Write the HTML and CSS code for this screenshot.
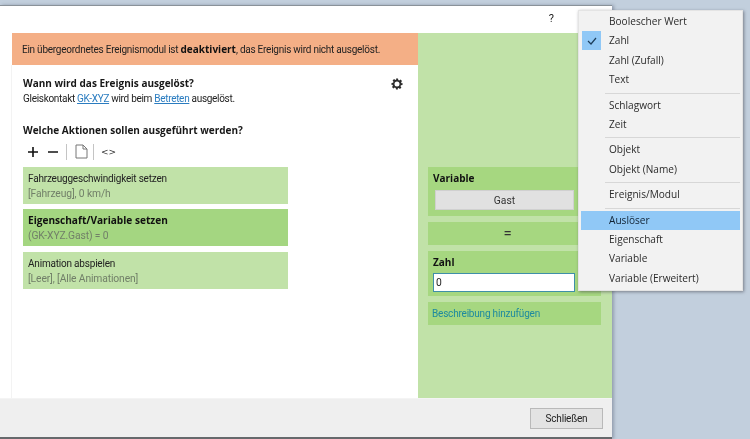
FILE: index.html
```html
<!DOCTYPE html>
<html lang="de">
<head>
<meta charset="utf-8">
<title>Ereignis</title>
<link rel="stylesheet" href="styles.css">
</head>
<body>
<div class="window">
  <div class="titlebar"><span class="help">?</span></div>
  <div class="content">
    <div class="main">
      <div class="banner">Ein übergeordnetes Ereignismodul ist <b>deaktiviert</b>, das Ereignis wird nicht ausgelöst.</div>
      <div class="body">
        <div class="trigger-head">
          <h2 class="heading">Wann wird das Ereignis ausgelöst?</h2>
          <svg class="gear" width="12" height="12" viewBox="0 0 24 24"><path fill="#2b2b2b" fill-rule="evenodd" d="M10 1h4l.6 3.2 1.9.8 2.7-1.8 2.8 2.8-1.8 2.7.8 1.9L23 10v4l-3.2.6-.8 1.9 1.8 2.7-2.8 2.8-2.7-1.8-1.9.8L13.9 23H10l-.6-3.2-1.9-.8-2.7 1.8-2.8-2.8 1.8-2.7-.8-1.9L1 14v-4l3.2-.6.8-1.9-1.8-2.7 2.8-2.8 2.7 1.8 1.9-.8zM12 7a5 5 0 1 0 0 10 5 5 0 0 0 0-10z"/></svg>
        </div>
        <p class="desc">Gleiskontakt <a href="#">GK-XYZ</a> wird beim <a href="#">Betreten</a> ausgelöst.</p>
        <h2 class="heading actions-head">Welche Aktionen sollen ausgeführt werden?</h2>
        <div class="toolbar">
          <svg class="tool" width="10" height="10" viewBox="0 0 10 10"><path d="M0 5h10M5 0v10" stroke="#111" stroke-width="1.6"/></svg>
          <svg class="tool tool-minus" width="10" height="10" viewBox="0 0 10 10"><path d="M0 5h10" stroke="#222" stroke-width="1.6"/></svg>
          <span class="sep sep-a"></span>
          <svg class="tool" width="13" height="15" viewBox="0 0 13 15"><path d="M1 1h7l4 4v9H1zM8 1v4h4" fill="none" stroke="#777" stroke-width="1"/></svg>
          <span class="sep sep-b"></span>
          <span class="code">&lt;&gt;</span>
        </div>
        <div class="action"><div class="action-title">Fahrzeuggeschwindigkeit setzen</div><div class="action-sub">[Fahrzeug], 0 km/h</div></div>
        <div class="action active"><div class="action-title">Eigenschaft/Variable setzen</div><div class="action-sub">(GK-XYZ.Gast) = 0</div></div>
        <div class="action last"><div class="action-title">Animation abspielen</div><div class="action-sub">[Leer], [Alle Animationen]</div></div>
      </div>
    </div>
    <aside class="side">
      <div class="block">
        <div class="block-title">Variable</div>
        <button class="var-btn">Gast</button>
      </div>
      <div class="block equals">=</div>
      <div class="block">
        <div class="block-title">Zahl</div>
        <input class="num" value="0">
      </div>
      <div class="block add-desc">Beschreibung hinzufügen</div>
    </aside>
  </div>
  <div class="footer"><button class="close">Schließen</button></div>
</div>
<div class="menu">
  <div class="item">Boolescher Wert</div>
  <div class="item checked"><span class="check"><svg width="10" height="8" viewBox="0 0 10 8"><path d="M1 4l3 3 5-6" fill="none" stroke="#1c3d5a" stroke-width="1.2"/></svg></span>Zahl</div>
  <div class="item">Zahl (Zufall)</div>
  <div class="item">Text</div>
  <div class="rule"></div>
  <div class="item">Schlagwort</div>
  <div class="item">Zeit</div>
  <div class="rule"></div>
  <div class="item">Objekt</div>
  <div class="item">Objekt (Name)</div>
  <div class="rule"></div>
  <div class="item">Ereignis/Modul</div>
  <div class="rule"></div>
  <div class="item hover">Auslöser</div>
  <div class="item">Eigenschaft</div>
  <div class="item">Variable</div>
  <div class="item">Variable (Erweitert)</div>
</div>
</body>
</html>
```
FILE: styles.css
```css
* { box-sizing: border-box; }
html, body { margin: 0; height: 100%; }
body {
  width: 750px;
  height: 439px;
  overflow: hidden;
  position: relative;
  padding-top: 5px;
  background: #c2cfdd;
  font-family: Roboto, "Liberation Sans", sans-serif;
  font-size: 10px;
  color: #222;
  filter: blur(0.35px);
}
.window {
  width: 612px;
  height: 434px;
  background: #fff;
  display: flex;
  flex-direction: column;
  border-top: 1px solid #8a9299;
  border-bottom: 2px solid #66696c;
  box-shadow: 2px 0 3px rgba(90,100,120,.45);
}
.titlebar { height: 27px; display: flex; justify-content: flex-end; padding: 6px 58px 0 0; }
.help { font-size: 11px; line-height: 14px; color: #222; }
.content { flex: 1; display: flex; min-height: 0; }
.main { flex: 1; min-width: 0; padding-left: 12px; display: flex; flex-direction: column; }
.banner {
  height: 32px;
  background: #f4af86;
  padding: 0 10px;
  line-height: 32px;
  font-size: 10px;
  letter-spacing: -.25px;
  white-space: nowrap;
}
.banner b { font-family: "Open Sans", sans-serif; font-size: 10px; letter-spacing: 0; color: #111; }
.body { flex: 1; padding: 11px 0 0 11px; border-left: 1px solid #f3f3f3; margin-left: -1px; }
.trigger-head { display: flex; justify-content: space-between; align-items: flex-start; padding-right: 15px; }
.heading { margin: 0; font-family: "Open Sans", sans-serif; font-size: 10px; line-height: 14px; font-weight: 700; color: #171717; }
.gear { margin-top: 2px; }
.desc { margin: 2px 0 0; font-size: 10px; letter-spacing: -.3px; line-height: 14px; }
.desc a { color: #2a7cc0; }
.actions-head { margin-top: 17px; }
.toolbar { display: flex; align-items: center; height: 21px; margin-top: 4px; padding-left: 5px; }
.tool { flex: none; }
.tool-minus { margin-left: 10px; }
.sep { width: 1px; height: 16px; background: #c4c4c4; }
.sep-a { margin: 0 8px; }
.sep-b { margin: 0 7px 0 5px; }
.code { font-family: "DejaVu Sans", sans-serif; font-size: 9px; color: #333; }
.action { width: 265px; height: 37px; margin-top: 5px; padding: 5px; background: #c1e2a8; line-height: 13px; white-space: nowrap; }
.action.last { margin-top: 6px; }
.action-title { font-size: 10px; letter-spacing: -.2px; }
.action-sub { margin-top: 2px; font-size: 10.3px; letter-spacing: -.12px; color: #717f68; }
.action.active { background: #a4d681; }
.action.active .action-title { font-family: "Open Sans", sans-serif; font-weight: 700; font-size: 10.1px; letter-spacing: 0; color: #111; }
.side { width: 194px; background: #c1e2a8; padding: 134px 11px 0 10px; }
.block { background: #a6d780; margin-bottom: 6px; padding: 4px 5px; }
.block-title { font-family: "Open Sans", sans-serif; font-weight: 700; font-size: 10px; line-height: 14px; color: #111; }
.var-btn { display: block; width: 139px; height: 20px; margin: 5px 0 2px 2px; padding: 0; border: 1px solid #d0d0d0; background: #e1e1e1; font: 10.3px Roboto, sans-serif; color: #333; }
.equals { height: 23px; padding: 0 14px 0 0; text-align: center; font-size: 15px; line-height: 23px; color: #333; }
.num { display: block; width: 142px; height: 19px; margin: 4px 0 0 0; padding: 0 2px; border: 1px solid #3f8fa8; background: #fff; font: 10.3px Roboto, sans-serif; color: #222; outline: none; }
.add-desc { height: 23px; padding: 0 4px; line-height: 23px; font-size: 10px; letter-spacing: -.2px; color: #1e8a9e; margin-bottom: 0; }
.footer { height: 39px; background: #efefef; display: flex; justify-content: flex-end; align-items: flex-start; padding: 9px 9px 0 0; border-top: 1px solid #f4f4f4; }
.close { width: 73px; height: 21px; padding: 0; border: 1px solid #b9b9b9; background: #e3e3e3; font: 10px Roboto, sans-serif; letter-spacing: -.2px; color: #222; }
.menu {
  position: absolute;
  left: 578px;
  top: 10px;
  width: 165px;
  height: 281px;
  padding: 1px 2px;
  background: #f2f2f2;
  border: 1px solid #e4e4e4;
  box-shadow: 1px 1px 3px rgba(60,60,70,.55);
  font-family: "Open Sans", "Noto Sans", sans-serif;
  font-size: 10.1px;
  color: #2b2b2b;
}
.item { position: relative; height: 19.4px; line-height: 19.4px; padding-left: 28px; }
.item.hover { background: #90c8f6; color: #123; }
.check { position: absolute; left: 1px; top: 0; width: 19px; height: 19px; background: #90c8f6; display: flex; align-items: center; justify-content: center; }
.rule { height: 1px; background: #d7d7d7; margin: 3px 0 2px 24px; }
```
